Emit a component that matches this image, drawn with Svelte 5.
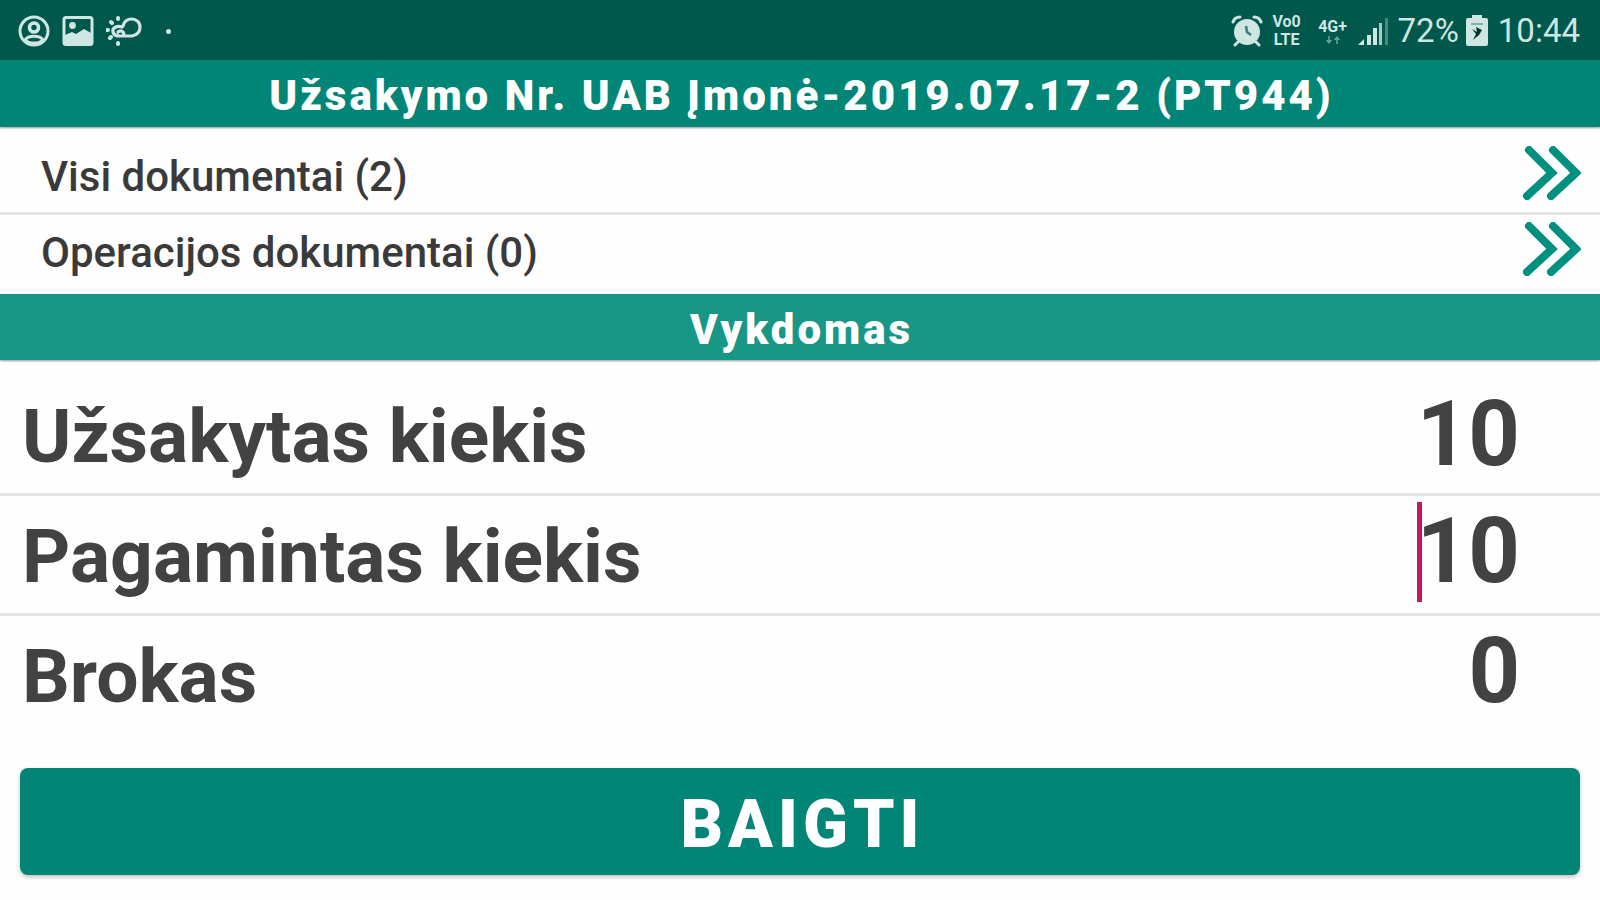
<script lang="ts">
	const orderTitle = 'Užsakymo Nr. UAB Įmonė-2019.07.17-2 (PT944)';

	const documents = [
		{ label: 'Visi dokumentai', count: 2 },
		{ label: 'Operacijos dokumentai', count: 0 }
	];

	const ordered = 10;
	let produced = $state('10');
	let defects = $state('0');
</script>

<svelte:head>
	<title>{orderTitle}</title>
</svelte:head>

<div class="screen">
	<div class="status-bar">
		<div class="notifications">
			<svg class="icon" viewBox="0 0 32 32" fill="none" stroke="currentColor">
				<circle cx="16" cy="16" r="14" stroke-width="3" />
				<circle cx="16" cy="12.5" r="4.5" stroke-width="3.6" />
				<path d="M7 25 C10 20 22 20 25 25 C21 29 11 29 7 25 Z" stroke-width="3" />
			</svg>
			<svg class="icon" viewBox="0 0 32 32">
				<rect x="2" y="2.5" width="28" height="27" rx="2" fill="none" stroke="currentColor" stroke-width="3" />
				<circle cx="10.5" cy="10.5" r="3.4" fill="currentColor" />
				<path d="M3 20 L10 17 L14 19 L22 14 L29 18 V29 H3 Z" fill="currentColor" />
			</svg>
			<svg class="icon weather" viewBox="0 0 36 32" fill="none" stroke="currentColor" stroke-linecap="round">
				<path
					d="M16 12 C11 10 6 13 7 17 C8 21 12 21 14 21 H26 C31 20 34 17 34 12 C34 7 30 4 26 4 C21 4 18 7 17 11 M12 17 C14 15 18 16 18 20"
					stroke-width="3.2"
				/>
				<path d="M12 3 V4 M5 7 L6 8 M1 15 H2 M4 23 L5 22 M12 28 V29" stroke-width="4" />
			</svg>
			<span class="dot"></span>
		</div>

		<div class="system">
			<svg class="icon" viewBox="0 0 32 32">
				<circle cx="16" cy="17" r="13" fill="currentColor" />
				<path
					d="M2 7 C3 4 6 2 9 2 M30 7 C29 4 26 2 23 2 M7 27 L4 30 M25 27 L28 30"
					stroke="currentColor"
					stroke-width="3"
					stroke-linecap="round"
					fill="none"
				/>
				<path d="M15 11 L16 17 L20 20" stroke="#3b8279" stroke-width="2.6" fill="none" />
			</svg>
			<span class="volte"><span>Vo0</span><span>LTE</span></span>
			<span class="network">
				<span>4G+</span>
				<svg viewBox="0 0 18 10" fill="currentColor">
					<path d="M3 0 H5 V5 H8 L4 10 L0 5 H3 Z" />
					<path d="M13 10 H15 V5 H18 L14 0 L10 5 H13 Z" />
				</svg>
			</span>
			<svg class="icon" viewBox="0 0 32 32" fill="currentColor">
				<path d="M1 30 L7 24 V30 Z" />
				<rect x="10" y="20" width="4" height="10" />
				<rect x="16" y="13" width="4" height="17" />
				<rect x="22" y="8" width="3" height="22" opacity="0.8" />
				<rect x="28" y="3" width="3" height="27" opacity="0.35" />
			</svg>
			<span class="battery-level">72%</span>
			<svg class="battery" viewBox="0 0 24 32">
				<path d="M7 3 V0 H17 V3 H21 Q23 3 23 5 V29 Q23 31 21 31 H3 Q1 31 1 29 V5 Q1 3 3 3 Z" fill="currentColor" />
				<path d="M7 14 L12 17 L11 12 L17 15 L14 20 L8 25 L11 19 Z" fill="#06332d" />
				<path d="M6 9 H18" stroke="#7fb3ab" stroke-width="2" />
			</svg>
			<time>10:44</time>
		</div>
	</div>

	<h1 class="title">{orderTitle}</h1>

	<nav class="documents">
		{#each documents as doc}
			<a href="#{doc.label}" class="document">
				<span>{doc.label} ({doc.count})</span>
				<svg viewBox="0 0 58 54" fill="none" stroke="currentColor" stroke-width="8" stroke-linecap="round">
					<path d="M6 4 L29 27 L4 50" />
					<path d="M30 4 L53 27 L28 50" />
				</svg>
			</a>
		{/each}
	</nav>

	<h2 class="title state">Vykdomas</h2>

	<form class="quantities" onsubmit={(e) => e.preventDefault()}>
		<div class="quantity">
			<span class="label">Užsakytas kiekis</span>
			<span class="value">{ordered}</span>
		</div>
		<div class="quantity">
			<label class="label" for="produced">Pagamintas kiekis</label>
			<span class="field">
				<span class="caret"></span>
				<input id="produced" class="value" inputmode="numeric" bind:value={produced} style="--chars: {produced.length}" />
			</span>
		</div>
		<div class="quantity">
			<label class="label" for="defects">Brokas</label>
			<span class="field">
				<input id="defects" class="value" inputmode="numeric" bind:value={defects} style="--chars: {defects.length}" />
			</span>
		</div>
		<button type="submit">BAIGTI</button>
	</form>
</div>

<style>
	:global(body) {
		margin: 0;
		background: #fefefe;
	}

	.screen {
		font-family: Roboto, 'Liberation Sans', sans-serif;
		color: #424242;
	}

	.status-bar {
		box-sizing: border-box;
		display: flex;
		justify-content: space-between;
		align-items: center;
		height: 60px;
		padding: 2px 20px 0 18px;
		background: #00574b;
		color: #cfe6e2;
		font-size: 33px;
		line-height: 40px;
	}

	.notifications,
	.system {
		display: flex;
		align-items: center;
	}

	.notifications {
		gap: 12px;
	}

	.system {
		gap: 6px;
	}

	.icon {
		width: 32px;
		height: 32px;
	}

	.weather {
		width: 36px;
	}

	.dot {
		width: 5px;
		height: 5px;
		margin-left: 12px;
		border-radius: 50%;
		background: currentColor;
	}

	.volte,
	.network {
		display: flex;
		flex-direction: column;
		align-items: center;
		width: 36px;
		font-size: 16px;
		font-weight: 700;
		line-height: 18px;
	}

	.network {
		margin-left: 4px;
	}

	.network svg {
		width: 16px;
		height: 8px;
		opacity: 0.5;
	}

	.battery-level,
	time {
		margin-left: 3px;
	}

	.battery {
		width: 24px;
		height: 32px;
	}

	.title {
		box-sizing: border-box;
		height: 67px;
		margin: 0;
		padding-top: 4px;
		background: #008577;
		color: #fff;
		font-size: 42px;
		font-weight: 900;
		line-height: 63px;
		letter-spacing: 3px;
		text-align: center;
		text-indent: 3px;
		box-shadow: 0 1px 2px rgba(0, 0, 0, 0.4);
	}

	.state {
		height: 66px;
		background: #199786;
	}

	.documents {
		padding: 12px 0 6px;
	}

	.document {
		display: flex;
		justify-content: space-between;
		align-items: center;
		height: 73px;
		padding: 0 19px 0 41px;
		color: #3a3a3a;
		font-size: 42px;
		font-weight: 500;
		text-decoration: none;
	}

	.document span {
		padding-top: 2px;
	}

	.document + .document {
		border-top: 3px solid #e4e4e4;
	}

	.document svg {
		width: 58px;
		height: 54px;
		margin-bottom: 6px;
		color: #00907f;
	}

	.quantity {
		display: flex;
		justify-content: space-between;
		align-items: center;
		height: 117px;
		padding: 0 80px 0 22px;
		border-bottom: 3px solid #e4e4e4;
	}

	.quantity:first-child {
		padding-top: 16px;
	}

	.quantity:nth-child(3) {
		border-bottom: 0;
	}

	.label {
		padding-top: 2px;
		font-size: 75px;
		font-weight: 700;
	}

	.value {
		font-size: 90px;
		font-weight: 700;
		line-height: 100px;
	}

	.field {
		position: relative;
		display: flex;
		margin-bottom: 6px;
	}

	.caret {
		position: absolute;
		top: 0;
		left: 0;
		width: 5px;
		height: 100px;
		background: #c2185b;
	}

	input {
		width: calc(var(--chars) * 1ch);
		height: 100px;
		padding: 0;
		border: 0;
		outline: 0;
		background: none;
		color: inherit;
		font-family: inherit;
		text-align: right;
	}

	button {
		display: block;
		width: calc(100% - 40px);
		height: 107px;
		margin: 35px 20px 24px;
		padding: 6px 0 0;
		border: 0;
		border-radius: 8px;
		background: #008577;
		box-shadow: 0 2px 4px rgba(0, 0, 0, 0.25);
		color: #fff;
		font-family: inherit;
		font-size: 66px;
		font-weight: 900;
		letter-spacing: 5px;
		text-indent: 5px;
	}
</style>
